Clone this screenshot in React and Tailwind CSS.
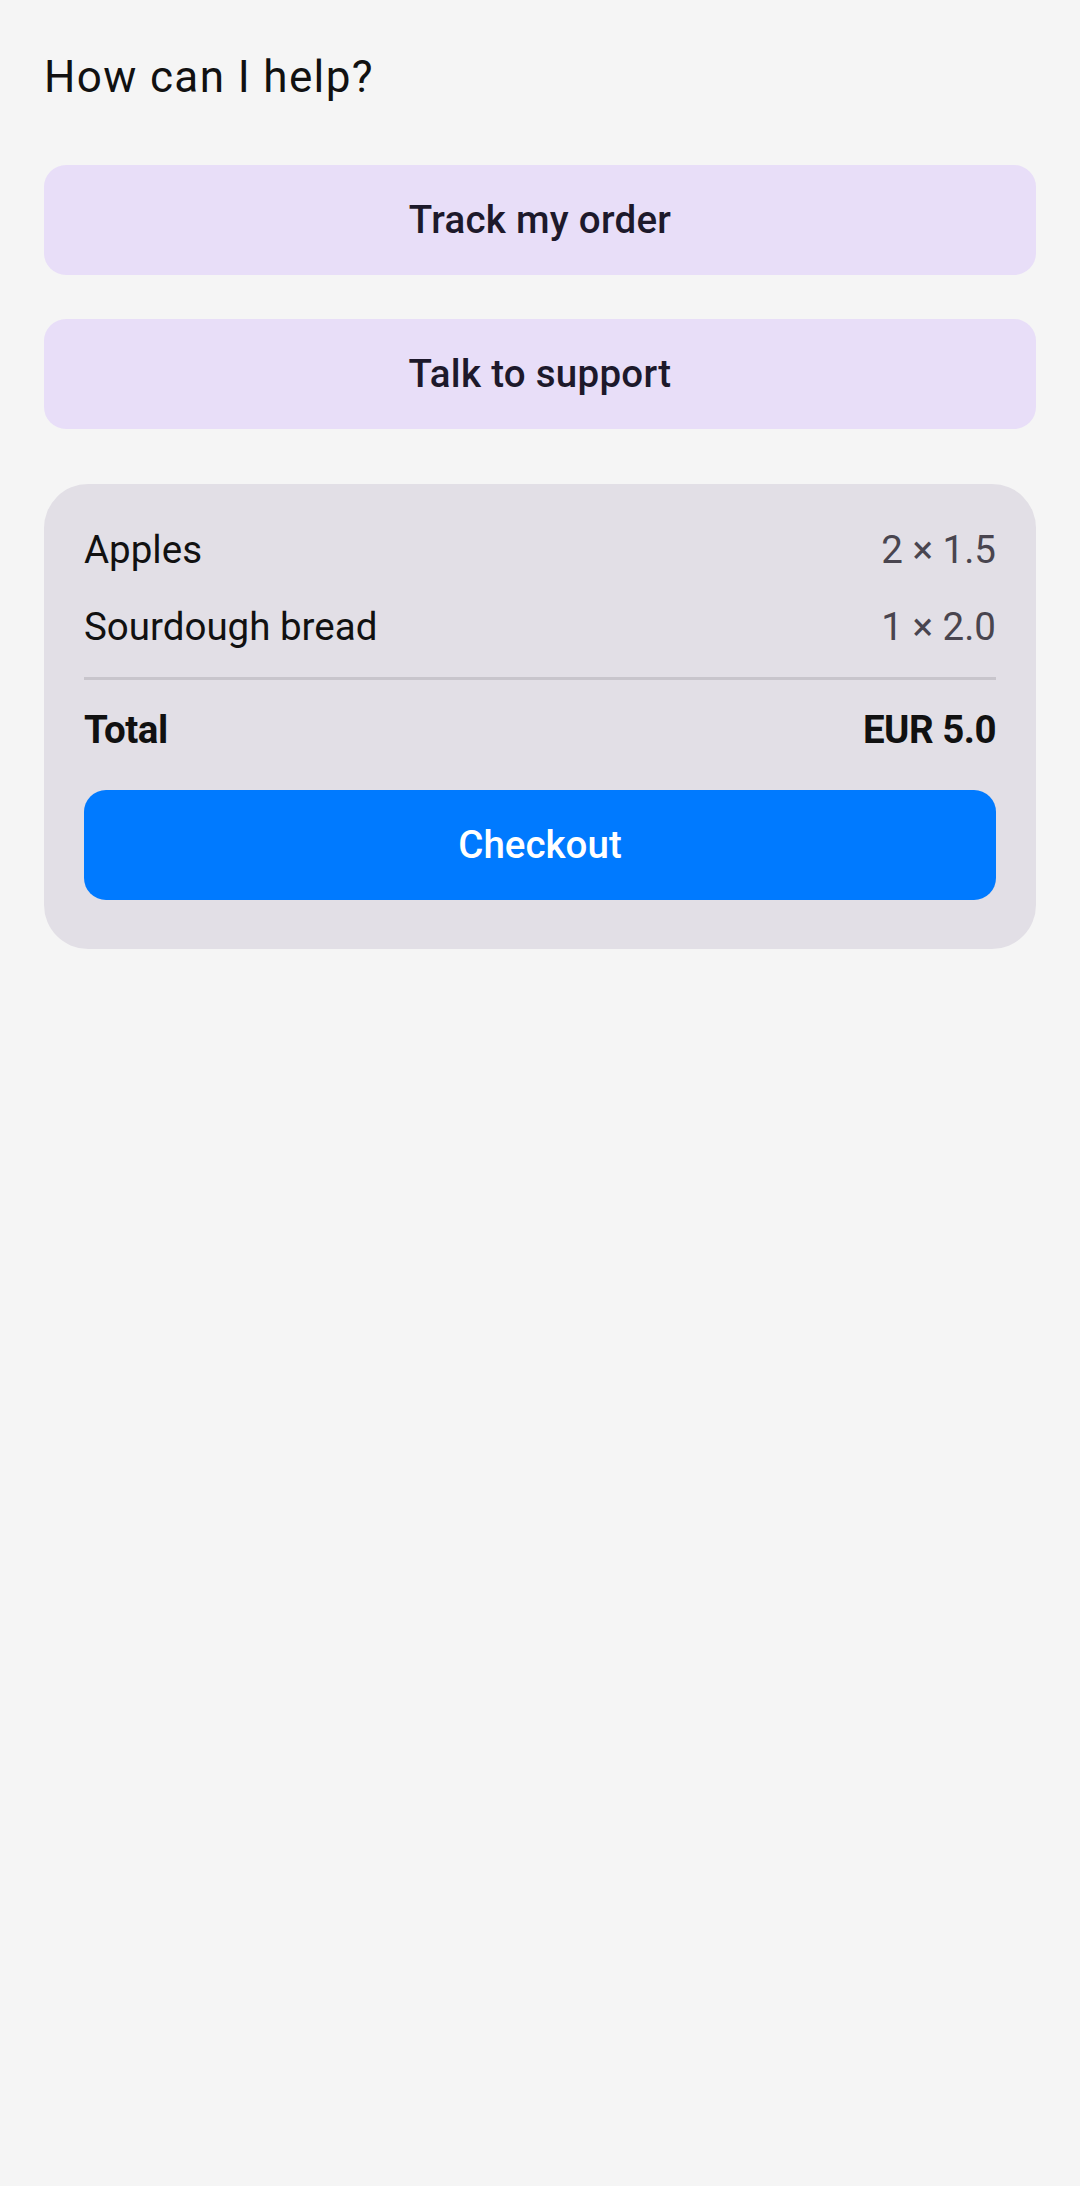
import React from 'react';

const items = [
  { name: 'Apples', qty: 2, price: '1.5' },
  { name: 'Sourdough bread', qty: 1, price: '2.0' },
];

const App = () => (
  <div
    className="min-h-[2186px] bg-[#f5f5f5] px-[44px] pt-[49px]"
    style={{ fontFamily: 'Roboto, "Noto Sans", sans-serif' }}
  >
    <h1 className="text-[44px] leading-[56px] tracking-[1.375px] text-[#111111] font-normal">How can I help?</h1>

    <div className="mt-[60px] flex flex-col gap-[44px]">
      {['Track my order', 'Talk to support'].map((label) => (
        <button
          key={label}
          className="h-[110px] w-full rounded-[22px] bg-[#e8def8] text-[38.5px] font-medium tracking-[0.275px] text-[#1d192b] flex items-center justify-center"
        >
          {label}
        </button>
      ))}
    </div>

    {/* Cart summary */}
    <div className="mt-[55px] rounded-[44px] bg-[#e2dfe6] px-10 pt-[44px] pb-[49px]">
      <div className="flex flex-col gap-[33px]">
        {items.map((item) => (
          <div key={item.name} className="flex justify-between text-[38.5px] leading-[44px]">
            <span className="text-[#111111]">{item.name}</span>
            <span className="text-[#49454f]">{item.qty} × {item.price}</span>
          </div>
        ))}
      </div>
      <div className="mt-[28px] h-[2.75px] bg-[#c8c5cc]" />
      <div className="mt-[28px] flex justify-between text-[38.5px] leading-[44px] font-bold text-[#111111] tracking-[-0.5px]">
        <span>Total</span>
        <span>EUR 5.0</span>
      </div>
      <button className="mt-[38px] h-[110px] w-full rounded-[22px] bg-[#007aff] text-[38.5px] font-medium text-white flex items-center justify-center">
        Checkout
      </button>
    </div>
  </div>
);

export default App;
